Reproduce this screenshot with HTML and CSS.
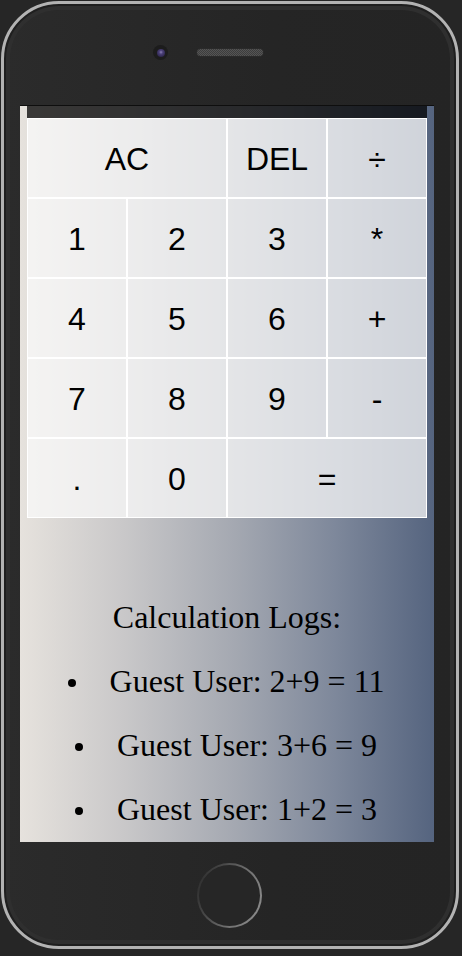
FILE: index.html
```html
<!DOCTYPE html>
<html lang="en">
<head>
<meta charset="utf-8">
<title>Calculator</title>
<link rel="stylesheet" href="styles.css">
</head>
<body>
<div class="phone">
  <div class="phone-top">
    <div class="camera"><div class="lens"></div></div>
    <div class="speaker"></div>
    <div></div>
  </div>
  <div class="screen">
    <div class="calculator-grid">
      <div class="output"></div>
      <button class="span-two">AC</button>
      <button>DEL</button>
      <button>÷</button>
      <button>1</button>
      <button>2</button>
      <button>3</button>
      <button>*</button>
      <button>4</button>
      <button>5</button>
      <button>6</button>
      <button>+</button>
      <button>7</button>
      <button>8</button>
      <button>9</button>
      <button>-</button>
      <button>.</button>
      <button>0</button>
      <button class="span-two">=</button>
    </div>
    <div class="logs">
      <p class="logs-title">Calculation Logs:</p>
      <ul class="logs-list">
        <li>Guest User: 2+9 = 11</li>
        <li>Guest User: 3+6 = 9</li>
        <li>Guest User: 1+2 = 3</li>
      </ul>
    </div>
  </div>
  <div class="phone-bottom">
    <div class="home"></div>
  </div>
</div>
</body>
</html>
```
FILE: styles.css
```css
* { box-sizing: border-box; }

html, body {
  margin: 0;
  padding: 0;
}

body {
  background: #262626;
  width: 462px;
  height: 956px;
  overflow: hidden;
  padding: 1px 0 0 1px;
}

.phone {
  width: 458px;
  height: 948px;
  border: 3px solid #b3b3b3;
  border-radius: 58px;
  background: linear-gradient(to right, #2b2b2b, #252525 60%, #242424);
  box-shadow: inset 0 0 0 2px #1f1f1f, inset 0 0 0 6px #2f2f2f;
  display: flex;
  flex-direction: column;
}

.phone-top {
  height: 101px;
  padding-top: 41px;
  display: grid;
  grid-template-columns: 1fr 66px 1fr;
  align-items: start;
}

.camera {
  justify-self: end;
  margin-right: 29px;
  width: 15px;
  height: 15px;
  border-radius: 50%;
  background: #1c1c1c;
  display: flex;
  align-items: center;
  justify-content: center;
}

.lens {
  width: 8px;
  height: 8px;
  border-radius: 50%;
  background: radial-gradient(circle at 50% 40%, #8a7fb3 0, #4a3f78 30%, #2a2446 80%);
}

.speaker {
  margin-top: 4px;
  width: 66px;
  height: 7px;
  border-radius: 4px;
  background-color: #3d3d3d;
  background-image:
    linear-gradient(45deg, #555 25%, transparent 25%, transparent 75%, #555 75%),
    linear-gradient(45deg, #555 25%, transparent 25%, transparent 75%, #555 75%);
  background-size: 2px 2px;
  background-position: 0 0, 1px 1px;
  box-shadow: 0 0 0 1px #2a2a2a;
}

.screen {
  margin-left: 16px;
  width: 414px;
  height: 737px;
  border-top: 1px solid #0e0e0e;
  overflow: hidden;
  background: linear-gradient(to right, #e6e2dd 0%, #c9c8c9 25%, #a4a8b1 52%, #7e889b 76%, #55647f 100%);
  font-family: "Liberation Serif", "Times New Roman", serif;
}

.calculator-grid {
  width: 400px;
  margin: 0 auto;
  display: grid;
  grid-template-columns: repeat(4, 100px);
  grid-template-rows: 12px repeat(5, 80px);
}

.output {
  grid-column: 1 / -1;
  background: rgba(0, 0, 0, 0.75);
}

.calculator-grid button {
  font-family: "Liberation Sans", Arial, sans-serif;
  font-size: 32px;
  color: #000;
  border: 1px solid #fff;
  background: rgba(250, 250, 250, 0.74);
  padding: 3px 0 0;
  margin: 0;
  outline: none;
  cursor: pointer;
}

.calculator-grid .span-two {
  grid-column: span 2;
}

.logs {
  padding-top: 67px;
  text-align: center;
  font-size: 32px;
  color: #000;
}

.logs-title {
  margin: 0;
  line-height: 64px;
}

.logs-list {
  margin: 0;
  padding: 0 0 0 40px;
  list-style: none;
}

.logs-list li {
  line-height: 64px;
}

.logs-list li::before {
  content: "";
  display: inline-block;
  width: 8px;
  height: 8px;
  border-radius: 50%;
  background: #000;
  margin-left: -42px;
  margin-right: 34px;
  vertical-align: 5px;
}

.phone-bottom {
  padding-top: 21px;
  display: flex;
  justify-content: center;
}

.home {
  width: 65px;
  height: 65px;
  border-radius: 50%;
  background: linear-gradient(110deg, #262626 0%, #484848 30%, #707070 60%, #929292 100%);
  padding: 2px;
  margin-left: -2px;
}

.home::after {
  content: "";
  display: block;
  width: 100%;
  height: 100%;
  border-radius: 50%;
  background: #262626;
}
```
